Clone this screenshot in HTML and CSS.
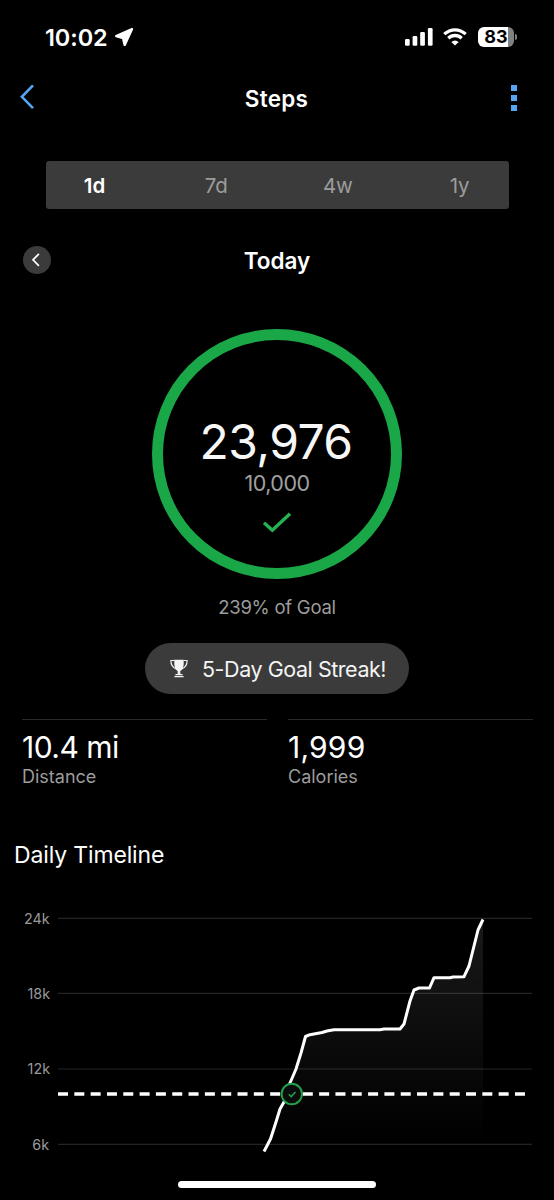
FILE: index.html
```
<!DOCTYPE html>
<html lang="en">
<head>
    <meta charset="UTF-8">
    <meta name="viewport" content="width=device-width, initial-scale=1.0">
    <title>Steps</title>
    <link rel="stylesheet" href="styles.css">
</head>
<body>
    <div class="status-bar">
        <div class="clock">
            <span class="time">10:02</span>
            <svg width="20" height="20" viewBox="0 0 20 20"><path d="M18 2 2.2 9.1 9 11 10.7 17.9Z" fill="#fff" stroke="#fff" stroke-width="2.4" stroke-linejoin="round"/></svg>
        </div>
        <div class="indicators">
            <svg width="28" height="18" viewBox="0 0 28 18" fill="#fff">
                <rect x="0" y="11" width="4.7" height="6.7" rx="1.3"/>
                <rect x="7.6" y="8" width="4.7" height="9.7" rx="1.3"/>
                <rect x="15.2" y="4" width="4.7" height="13.7" rx="1.3"/>
                <rect x="22.9" y="0" width="4.7" height="17.7" rx="1.3"/>
            </svg>
            <svg class="wifi" width="24" height="18" viewBox="0 0 24 18">
                <path d="M1.3 6.1Q6 1.8 12 1.8T22.7 6.1" fill="none" stroke="#fff" stroke-width="3.3"/>
                <path d="M5.3 10.3Q8.2 7.5 12 7.5T18.7 10.3" fill="none" stroke="#fff" stroke-width="3.3"/>
                <path d="M12 17.6 8.3 13.9Q12 10.9 15.7 13.9Z" fill="#fff"/>
            </svg>
            <div class="battery">83</div>
            <div class="battery-tip"></div>
        </div>
    </div>

    <div class="nav">
        <svg width="14" height="26" viewBox="0 0 14 26"><path d="M13 1.4 1.9 12.8 13 24.2" fill="none" stroke="#56a5f5" stroke-width="2.6"/></svg>
        <h1 class="title">Steps</h1>
        <div class="menu"><i></i><i></i><i></i></div>
    </div>

    <div class="tabs">
        <span class="tab active">1d</span>
        <span class="tab">7d</span>
        <span class="tab">4w</span>
        <span class="tab">1y</span>
    </div>

    <div class="day">
        <div class="prev">
            <svg width="28" height="28" viewBox="0 0 28 28"><path d="M15.9 7.8 10 13.8 15.9 19.8" fill="none" stroke="#fff" stroke-width="1.7"/></svg>
        </div>
        <h2 class="title today">Today</h2>
    </div>

    <div class="ring">
        <div class="steps">23,976</div>
        <div class="goal">10,000</div>
        <svg width="30" height="22" viewBox="0 0 30 22"><path d="M2 10.8 10.3 18.3 28 1.7" fill="none" stroke="#26b250" stroke-width="3.4"/></svg>
    </div>
    <div class="percent">239% of Goal</div>

    <div class="streak">
        <svg width="18" height="19" viewBox="0 0 18 19">
            <path d="M4.3 .8H13.7V5Q13.5 10.3 10.3 12V15.5H7.7V12Q4.5 10.3 4.3 5Z" fill="#f4f4f4"/>
            <path d="M4.5 1.5H.9Q.8 7.8 6.3 10M13.5 1.5H17.1Q17.2 7.8 11.7 10" fill="none" stroke="#f4f4f4" stroke-width="1.2"/>
            <path d="M5.4 15H12.6V16.3H5.4ZM4.4 16.9H13.6V18.3H4.4Z" fill="#f4f4f4"/>
        </svg>
        <span>5-Day Goal Streak!</span>
    </div>

    <div class="stats">
        <div class="stat">
            <div class="value distance">10.4 mi</div>
            <div class="label">Distance</div>
        </div>
        <div class="stat">
            <div class="value calories">1,999</div>
            <div class="label">Calories</div>
        </div>
    </div>

    <h3 class="section">Daily Timeline</h3>

    <svg class="chart" width="554" height="280" viewBox="0 890 554 280">
        <defs>
            <linearGradient id="fade" gradientUnits="userSpaceOnUse" x1="0" y1="919" x2="0" y2="1144">
                <stop offset="0" stop-color="#fff" stop-opacity=".1"/>
                <stop offset="1" stop-color="#fff" stop-opacity="0"/>
            </linearGradient>
        </defs>
        <g class="grid">
            <path d="M58 918.4H532"/>
            <path d="M58 993.4H532"/>
            <path d="M58 1069H532"/>
            <path d="M58 1144.4H532"/>
        </g>
        <g class="axis">
            <text x="49.5" y="923.5">24k</text>
            <text x="50" y="998.7">18k</text>
            <text x="50" y="1074.2">12k</text>
            <text x="49" y="1149.7">6k</text>
        </g>
        <path d="M264 1151.5 270.5 1139 276 1122 280 1109 284 1102 290 1083 296 1069 301 1053 305.5 1036.5 310 1034.7 322 1032.5 334 1029.7H380L384 1029H400L404 1024 410 1001 414 990 419 988H429.5L434 977.7H450L453 977 464 976.7 469 966 478 930 483 919.5V1151.5Z" fill="url(#fade)"/>
        <path class="goal-line" d="M58 1094H525.5"/>
        <path class="line" d="M264 1151.5 270.5 1139 276 1122 280 1109 284 1102 290 1083 296 1069 301 1053 305.5 1036.5 310 1034.7 322 1032.5 327 1031 334 1029.7H380L384 1029H400L404 1024 410 1001 414 990 419 988H429.5L434 977.7H450L453 977 464 976.7 469 966 478 930 483 919.5"/>
        <circle cx="291.8" cy="1094" r="10.2" fill="#0b0b0b" stroke="#22a04b" stroke-width="1.9"/>
        <path d="M288.7 1094.3 291.2 1096.6 295.5 1091.9" fill="none" stroke="#22a04b" stroke-width="1.5"/>
    </svg>

    <div class="home-bar"></div>
</body>
</html>
```
FILE: styles.css
```
* { box-sizing: border-box; }
body { margin: 0; width: 554px; height: 1200px; overflow: hidden; background: #000; color: #fff; font-family: Inter, "Liberation Sans", sans-serif; display: flex; flex-direction: column; }
h1, h2, h3 { margin: 0; }
svg { display: block; flex: none; }

.status-bar { height: 74px; padding: 0 37px 0 45px; display: flex; justify-content: space-between; align-items: center; }
.clock { display: flex; align-items: center; gap: 6px; }
.time { width: 63px; font-size: 23.5px; font-weight: 600; letter-spacing: -0.1px; }
.indicators { display: flex; align-items: center; }
.wifi { margin: 0 11px 0 10px; }
.battery { width: 36px; height: 20px; border-radius: 6px; background: linear-gradient(to right, #fff 82%, #818181 82%); color: #000; font-size: 18px; font-weight: 700; line-height: 20px; text-align: center; }
.battery-tip { width: 2px; height: 6px; margin-left: 1px; border-radius: 0 2px 2px 0; background: #818181; }

.nav { height: 46px; padding: 0 37px 0 20px; display: flex; align-items: center; justify-content: space-between; }
.title { font-size: 22.5px; font-weight: 600; line-height: 28px; letter-spacing: 0.3px; }
.nav .title { padding: 4px 0 0 8px; }
.menu { display: grid; gap: 4px; padding-top: 2px; }
.menu i { width: 6px; height: 6px; background: #56a5f5; }

.tabs { height: 48px; margin: 41px 45.5px 0; padding: 0 27px; display: flex; justify-content: space-between; align-items: center; background: #3b3b3b; border-radius: 3px; }
.tab { width: 44px; text-align: center; font-size: 20.5px; color: #9c9c9c; font-weight: 400; letter-spacing: -0.2px; }
.tab.active { color: #fff; font-weight: 600; letter-spacing: 0; }

.day { height: 28px; margin-top: 37px; padding: 0 23px; display: grid; grid-template-columns: 28px 1fr 28px; align-items: center; }
.prev { height: 28px; margin-top: -1px; border-radius: 50%; background: #3b3b3b; }
.today { text-align: center; padding-top: 1px; letter-spacing: 0; }

.ring { width: 250px; height: 250px; margin: 55px auto 0; padding-top: 82px; border: 11.5px solid #1aa747; border-radius: 50%; display: flex; flex-direction: column; align-items: center; }
.steps { margin-right: 2px; font-size: 48px; line-height: 40px; letter-spacing: -0.6px; color: #f7f7f7; }
.goal { margin-top: 7px; font-size: 21.5px; line-height: 28px; letter-spacing: -0.5px; color: #a0a0a0; margin-bottom: 15px; }
.percent { margin-top: 16px; text-align: center; font-size: 18.5px; line-height: 24px; letter-spacing: -0.25px; color: #9c9c9c; }

.streak { width: 264px; height: 51px; margin: 24px auto 0; padding-left: 25px; display: flex; align-items: center; gap: 14px; border-radius: 26px; background: #3b3b3b; color: #f4f4f4; font-size: 21.5px; letter-spacing: -0.45px; white-space: nowrap; }

.stats { margin: 25px 21px 0 22px; display: grid; grid-template-columns: 1fr 1fr; gap: 21px; }
.stat { height: 70px; padding-top: 9px; border-top: 1px solid #292929; }
.value { font-size: 30px; line-height: 36px; white-space: nowrap; }
.distance { letter-spacing: -0.5px; }
.calories { letter-spacing: 0.2px; }
.label { font-size: 18px; line-height: 24px; color: #9c9c9c; }

.section { margin: 51px 0 0 14px; font-size: 23px; line-height: 30px; font-weight: 400; letter-spacing: -0.15px; }

.chart { margin-top: 20px; }
.grid { fill: none; stroke: #242424; stroke-width: 1.2; }
.axis { font-size: 14.3px; fill: #999; text-anchor: end; }
.goal-line { fill: none; stroke: #fff; stroke-width: 3.3; stroke-dasharray: 10 6.32; }
.line { fill: none; stroke: #fff; stroke-width: 3; stroke-linejoin: round; }

.home-bar { width: 198px; height: 7px; margin: 11px auto 0; border-radius: 4px; background: #fff; }
```
